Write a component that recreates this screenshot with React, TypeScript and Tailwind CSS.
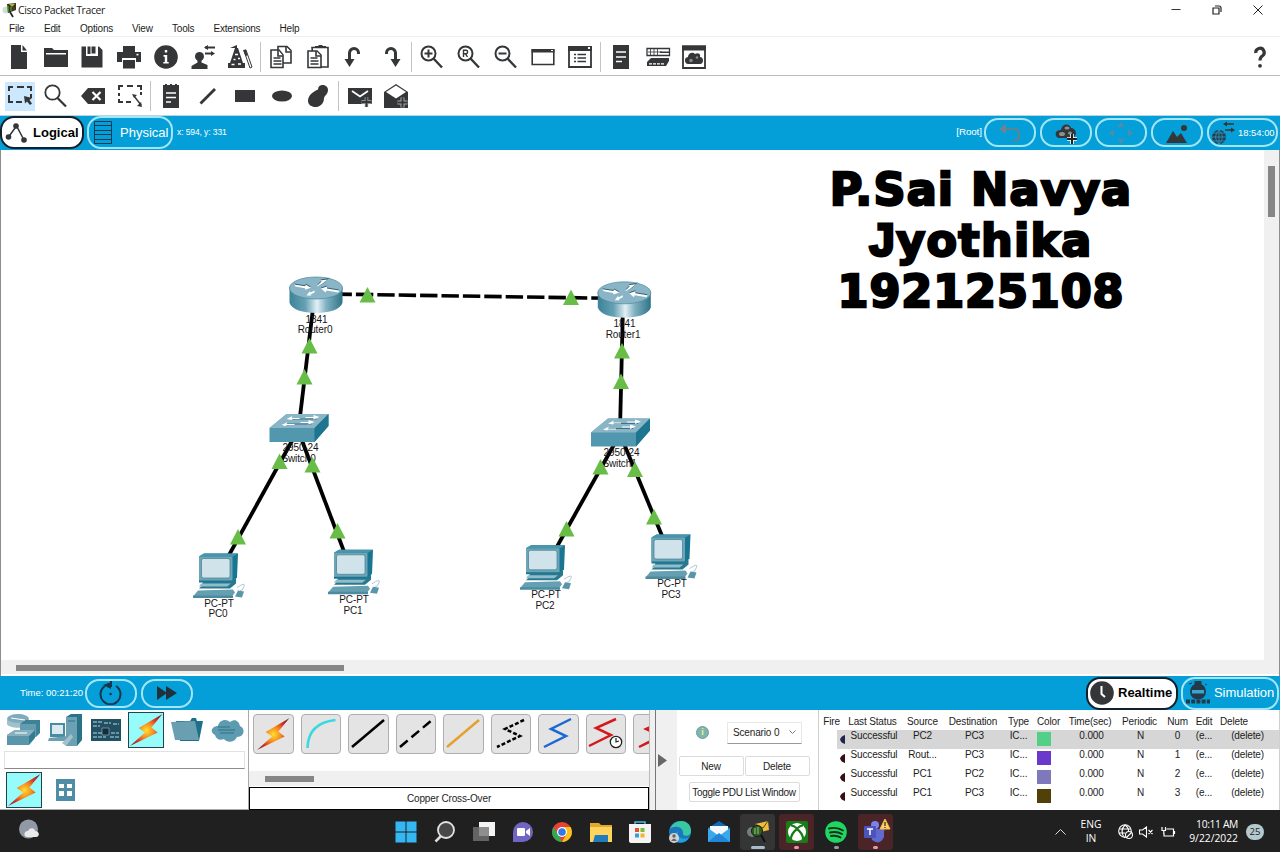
import React from "react";

type Kids = { children?: React.ReactNode };

const DARK = "#343638";

function Icon({ children, s = 24 }: Kids & { s?: number }) {
  return (
    <svg width={s} height={s} viewBox="0 0 24 24" fill={DARK} stroke="none" className="block shrink-0 overflow-visible">
      {children}
    </svg>
  );
}

function Sep() {
  return (
    <div className="flex w-[4.4px] justify-center">
      <div className="h-[30px] w-px bg-[#c4c4c4]" />
    </div>
  );
}

function Tool({ children, active }: Kids & { active?: boolean }) {
  return (
    <div className="flex w-[36.8px] items-center justify-center">
      <div className={active ? "flex h-[29px] w-[30px] items-center justify-center bg-[#cce8ff]" : "flex h-[29px] w-[30px] items-center justify-center"}>
        <Icon>{children}</Icon>
      </div>
    </div>
  );
}

function Lens({ children }: Kids) {
  return (
    <g>
      <circle cx="8.5" cy="8.5" r="7" fill="none" stroke={DARK} strokeWidth="2" />
      <path d="M13.5 13.5 22 22.5" stroke={DARK} strokeWidth="2.4" />
      {children}
    </g>
  );
}

function Toolbars() {
  return (
    <>
      <div className="flex h-[39px] items-center border-b-[1.5px] border-[#bdbdbd] pl-[0.4px] pt-[2px]">
        <Tool><path d="M4 0h10v7h6v17H4zM15.5 0 20 5.5h-4.5z" /></Tool>
        <Tool><path d="M0 3h8l2 2h14v3H0zM0 9.500h24V22H0zM0 3h2v8H0zM22 6h2v6h-2z" /></Tool>
        <Tool><path d="M1.500 1.500H6V11h12V1.500h1l3.500 3.500v17.500h-21zM11.500 1.500h4v7h-4zM7.500 1.500h3V9h-3z" /></Tool>
        <Tool><path d="M6 1h12v6H6zM0 7h24v10h-5v-4H5v4H0zM6 15h12v8.500H6z" /><rect x="19.500" y="8.800" width="2" height="1.600" fill="white" /></Tool>
        <Tool><circle cx="12" cy="12" r="11.800" /><path d="M10.800 5h2.400v2.600h-2.400zM9.500 10h3.700v7h1.500v1.600H9.300V17h1.500v-5.300H9.500z" fill="white" /></Tool>
        <Tool>
          <circle cx="8.500" cy="11.500" r="4.500" /><path d="M6.500 14h4v3.500l6 2.500v4H.500v-3l6-3.500z" />
          <path d="M14 2.500h10M14 8.500h8" stroke={DARK} strokeWidth="1.800" /><path d="m13 2.500 4-2.500v5zM24 8.500 20 6v5z" />
        </Tool>
        <Tool>
          <path d="m2 3 7-3v3h1l5 15h2v5H0v-5h2L7 3z" /><path d="M7 9.500h3M5.500 14.500h2M10 13.500h2M3.500 19.500h3M10 19h3" stroke="white" strokeWidth="1.600" /><path d="m16 6 2-1 6 17-2 1z" fill="white" stroke={DARK} strokeWidth="1" /><path d="m15 5 3-.500 1.500 6-2 .500z" />
        </Tool>
        <Sep />
        <Tool>
          <g fill="white" stroke={DARK} strokeWidth="1.600"><path d="M9 1.500h9l4 4V18H9z" /><path d="M17 2v5h5" /><path d="M2 5h8l4 5v12.500H2z" /><path d="M9 5v6h5M4.500 13h7M4.500 16h8M4.500 19h8" /></g>
        </Tool>
        <Tool>
          <g fill="white" stroke={DARK} strokeWidth="1.600"><path d="M6 2.500h16V22H8z" /><path d="M2 6h9l4 4v12.500H2z" /><path d="M10 6v5h5M4.500 13h7M4.500 16h8M4.500 19h8" /></g><path d="M9 3V1h3l1-1h3l1 1h3v2z" />
        </Tool>
        <Tool><path d="M7.500 15V8a4.500 4.500 0 0 1 9 0v1" fill="none" stroke={DARK} strokeWidth="3" /><path d="M2.500 14h10L7.500 22z" /></Tool>
        <Tool><path d="M16.500 15V8a4.500 4.500 0 0 0-9 0v1" fill="none" stroke={DARK} strokeWidth="3" /><path d="M11.500 14h10l-5 8z" /></Tool>
        <Sep />
        <Tool><Lens><path d="M8.500 4.500v8M4.500 8.500h8" stroke={DARK} strokeWidth="2" /></Lens></Tool>
        <Tool><Lens><path d="M6.500 12V5.300h2.400a1.700 1.700 0 0 1 0 3.500H6.800h1.700l2 3.200" fill="none" stroke={DARK} strokeWidth="1.400" /></Lens></Tool>
        <Tool><Lens><path d="M4.500 8.500h8" stroke={DARK} strokeWidth="2" /></Lens></Tool>
        <Tool><path d="M1.200 5h21.600v14.500H1.200z" fill="none" stroke={DARK} strokeWidth="1.600" /><path d="M.500 4h23v3.500H.500z" /><path d="M20 5h2v1h-2z" fill="white" /></Tool>
        <Tool>
          <path d="M1 2h22v20H1z" fill="none" stroke={DARK} strokeWidth="1.800" /><path d="M0 1h24v5H0z" />
          <path d="M6 9.500h2M6 13h2M6 16.500h2M9.500 9.500H18M9.500 13H18M9.500 16.500H18" stroke={DARK} strokeWidth="1.700" /><path d="M20 2h2v2h-2z" fill="white" />
        </Tool>
        <Sep />
        <Tool><path d="M4 0h16v24H4z" /><path d="M7 7h10M7 12h10M7 16.500h6" stroke="white" strokeWidth="1.700" /></Tool>
        <Tool>
          <path d="M1 3.500h22.500v7H1z" fill="none" stroke={DARK} strokeWidth="1.300" /><path d="M2 7h14M4.500 4v6M8 4v6M11.500 4v6" stroke={DARK} strokeWidth=".8" /><path d="M14 6.500h9v1.500h-9z" />
          <path d="M5 13h18v3l-3 5H1v-4z" /><path d="M3 18.800h15" stroke="white" strokeWidth="1.200" strokeDasharray="3 1" />
        </Tool>
        <Tool>
          <path d="M1 1.500h22v21.500H1z" fill="none" stroke={DARK} strokeWidth="1.800" /><path d="M0 .500h24v5H0z" />
          <path d="M7 19a3.500 3.500 0 0 1-1-7c0-4 5-5.500 7-3 3-2 6 0 5 3 4 0 4 7 0 7z" /><circle cx="9" cy="15.500" r="1.800" fill="#888" /><circle cx="15" cy="12.500" r="1.300" fill="#888" />
        </Tool>
        <div className="flex flex-1 justify-end pr-[8px]">
          <Icon><path d="M7.800 8a4.200 4.200 0 1 1 6.500 3c-1.600 1-2.300 2-2.300 4.500" fill="none" stroke={DARK} strokeWidth="3.200" /><circle cx="12" cy="20.800" r="1.900" /></Icon>
        </div>
      </div>
      <div className="flex h-[39.5px] items-center border-b border-[#b5d6e2] pl-[1.2px] pt-[1.500px]">
        <Tool active>
          <path d="M1 7V3h4M9 3h7M19 3h4v4M23 10v4M1 11v7h4M8 18h6" fill="none" stroke={DARK} strokeWidth="2" /><path d="m16 12 8 2-2.500 2 2.500 3.500-2 1.500-3-3.500-2 2z" />
        </Tool>
        <Tool><circle cx="8.500" cy="8.500" r="7.200" fill="none" stroke={DARK} strokeWidth="1.800" /><path d="m13.500 14 8.500 8.500" stroke={DARK} strokeWidth="2.300" /></Tool>
        <Tool><path d="m0 12 7-8h17v16H7z" /><path d="m11.500 8 8 8m0-8-8 8" stroke="white" strokeWidth="2.200" /></Tool>
        <Tool>
          <path d="M1 6V2h4M9 2h6M19 2h4v4M23 8v3M1 9v3M1 15v3h4M8 18h5" fill="none" stroke={DARK} strokeWidth="2" /><path d="m16 12 7 9" stroke={DARK} strokeWidth="1.400" /><path d="m14 10 5 1-3 3zM24 23l-5-1 4-4z" />
        </Tool>
        <Sep />
        <Tool><path d="M4 1h2V0h2v1h3V0h2v1h3V0h2v1h2v23H4z" /><path d="M7 9h10M7 13.500h10M7 18h5" stroke="white" strokeWidth="1.700" /></Tool>
        <Tool><path d="M4.500 19.500 19 5" stroke={DARK} strokeWidth="2.800" /></Tool>
        <Tool><path d="M2 6h20v12H2z" /></Tool>
        <Tool><ellipse cx="12" cy="12" rx="10" ry="5.500" /></Tool>
        <Tool><path d="M12 5.500C12-1 22 0 22 6c0 4-3 5-4 8 0 12-16 11-16 3 0-5 4-9 10-11.500z" /></Tool>
        <Sep />
        <Tool><path d="M0 4h24v16H0z" /><path d="m4 7 8 5.500L20 7" fill="none" stroke="white" strokeWidth="1.800" /><path d="M18.500 13v10M13.500 18h10" stroke="#aaa" strokeWidth="3.500" /><path d="M18.500 13v10M13.500 18h10" stroke={DARK} strokeWidth="2" /></Tool>
        <Tool><path d="M0 8 12 0l12 8v16H0z" /><path d="m2 8 10-6.500L22 8l-10 6.500z" fill="white" /><path d="M18.500 13.500v10M13.500 18.500h10" stroke="#aaa" strokeWidth="4" /><path d="M18.500 13.500v10M13.500 18.500h10" stroke={DARK} strokeWidth="2" /></Tool>
      </div>
    </>
  );
}

function Pill({ children, w }: Kids & { w: string }) {
  return <div className={"flex h-[29px] shrink-0 items-center justify-center rounded-[14px] border-2 border-[#a4e6f6] " + w}>{children}</div>;
}

function TopBlue() {
  return (
    <div className="flex h-[34.5px] items-center bg-[#049fd9] text-white">
      <div className="flex h-[33px] w-[84px] items-center rounded-[14px] border-2 border-[#13202a] bg-white pl-[3px] text-[13px] font-bold text-black">
        <svg width="24" height="24" viewBox="0 0 24 24" className="mr-[4px] shrink-0"><path d="m3.500 16 8-11 7.500 14" fill="none" stroke={DARK} strokeWidth="1.500" /><g fill={DARK}><circle cx="3.500" cy="16" r="2.800" /><circle cx="11" cy="5" r="2.800" /><circle cx="19" cy="19" r="2.800" /></g></svg>
        <span>Logical</span>
      </div>
      <div className="ml-[3px] flex h-[33px] w-[86px] items-center rounded-[14px] border-2 border-[#a4e6f6] pl-[5px] text-[13px]">
        <svg width="18" height="23" viewBox="0 0 18 23" className="mr-[8px] shrink-0"><path d="M.500 .500h17v22H.500zM.500 4.500h17M.500 9.500h17M.500 13.500h17M.500 18.500h17" fill="none" stroke="#0f3c52" strokeWidth="1" /></svg>
        <span>Physical</span>
      </div>
      <span className="ml-[4px] text-[8.500px] tracking-[-0.1px]">x: 594, y: 331</span>
      <div className="ml-auto flex items-center gap-[3.700px] pr-[2.200px]">
        <span className="-mr-[1.500px] text-[9.800px] tracking-[-0.1px]">[Root]</span>
        <Pill w="w-[52px]"><svg width="24" height="20" viewBox="0 0 24 20"><path d="M5 6h11q5 0 5 5v2q0 5-6 5" fill="none" stroke="#5f8295" strokeWidth="2.200" /><path d="m1 6 7-5v10z" fill="#6f8492" /></svg></Pill>
        <Pill w="w-[52px]"><svg width="24" height="24" viewBox="0 0 24 24"><path d="M5 17a4 4 0 0 1-2-7c2-1 2-1 4-1 1-7 9-7 10-2 5 0 7 7 2 10z" fill={DARK} /><g fill="#8a9196"><ellipse cx="8" cy="13" rx="3" ry="2" /><ellipse cx="13" cy="7" rx="2.500" ry="1.500" /><ellipse cx="16" cy="12" rx="2" ry="1.500" /></g><path d="M18 13v10M13 18h10" stroke="white" strokeWidth="3.600" /><path d="M18 13v10M13 18h10" stroke="#222" strokeWidth="2" /></svg></Pill>
        <Pill w="w-[52px]"><svg width="24" height="24" viewBox="0 0 24 24" fill="#4e8cab"><path d="m12 1 4 5H8zM12 23l4-5H8zM0 12l5-4v8zM24 12l-5-4v8z" /></svg></Pill>
        <Pill w="w-[52px]"><svg width="24" height="20" viewBox="0 0 24 20" fill={DARK}><path d="m1 20 7-12 4 6 4-4 6 10z" /><circle cx="19" cy="5" r="3" /></svg></Pill>
        <Pill w="w-[71px]">
          <svg width="26" height="26" viewBox="0 0 26 26" className="shrink-0"><circle cx="9" cy="17" r="7" fill="#1f3f50" /><path d="M2 17h14M9 10v14M3 13h12M3 21h12M9 10q-7 7 0 14M9 10q7 7 0 14" fill="none" stroke="#38a0cc" strokeWidth=".7" /><path d="M15 4h9M15 10h8" stroke={DARK} strokeWidth="1.600" /><path d="m13 4 4-2.500v5zM25 10l-4-2.500v5z" fill={DARK} /></svg>
          <span className="ml-[2px] text-[9.400px]">18:54:00</span>
        </Pill>
      </div>
    </div>
  );
}

function Router({ x, y }: { x: number; y: number }) {
  return (
    <g transform={`translate(${x} ${y})`}>
      <path d="M0 11v15c3 14 50 14 53 0V11z" fill="url(#cyl)" />
      <ellipse cx="26.500" cy="11.500" rx="26.500" ry="11" fill="#8ab5c6" stroke="#4d8a9f" strokeWidth=".7" />
      <g fill="#34606f" transform="translate(0 -1)"><path d="m4.500 8 11 1.800 1-1.500 5 3-6 2v-1.500L6 10zM49 16l-12-2-1 2-4.500-4 6-2v2l12 2zM28 9l4-4-1-1 6-1 3-1-5 5-5 3z" /></g>
      <g fill="white"><path d="m4.500 8 11 1.800 1-1.500 5 3-6 2v-1.500L6 10zM49 16l-12-2-1 2-4.500-4 6-2v2l12 2zM28 9l4-4-1-1 7-1-5 4-5 3zM25 14l-4 2-1-1-3 4h5l-1-1 4-2z" /></g>
    </g>
  );
}

function Switch({ x, y }: { x: number; y: number }) {
  return (
    <g transform={`translate(${x} ${y})`}>
      <path d="M0 14 17 0h42v12L45 28H0z" fill="#5197ae" />
      <path d="M0 14 17 0h42L45 14z" fill="#8ab5c6" />
      <path d="M45 14 59 0v12L45 28z" fill="#1d758f" />
      <g stroke="#3f7488" strokeWidth="1" fill="none"><path d="M21 5h26M15 10h27" /></g>
      <path d="m17 5 6-3-1 2h8v1h-7l-1 1zM50 3l-6 2.500v-1.500h-8v-1h8V1zM12 11l6-3-1 2h8v1h-8l-1 1zM45 8l-6 2.500V9h-8V8h8V6z" fill="white" />
    </g>
  );
}

function Pc({ x, y }: { x: number; y: number }) {
  return (
    <g transform={`translate(${x} ${y})`}>
      <path d="m6 3 5-3h34l-1 24-5 5H6z" fill="#197590" />
      <path d="m6 3 5-3h34l-5 3z" fill="#4995aa" />
      <path d="M6 3h33.500v24H6z" fill="#6ca5b8" />
      <rect x="8.500" y="5" width="28.500" height="19.500" rx="2" fill="#d0e2ea" stroke="#427f94" strokeWidth=".7" />
      <path d="M10 28h27l6-3v5l-6 5H6l3-3z" fill="#27798f" /><path d="M8 30h30l-4 3H6z" fill="#91bdcb" />
      <path d="m5 37 35-1 2 3-3 4H0z" fill="#659fb2" /><path d="M0 42h40v2.500H0z" fill="#4b8ba0" />
      <path d="M44 34q9-6 7-1t-4 4" fill="none" stroke="#9bbbc6" strokeWidth=".8" /><path d="m45 37 6 1-2 6-7-1z" fill="#5996aa" />
    </g>
  );
}

const cables: [number, number, number, number][] = [
  [314, 300, 299, 425], [298, 430, 218, 575], [298, 430, 351, 570],
  [623, 305, 620, 430], [620, 434, 545, 568], [620, 434, 672, 560],
];
const lights: [number, number][] = [
  [367.5, 295], [571, 297.5], [309.5, 346], [304.5, 377], [622, 351], [621, 381.5],
  [279.5, 461.5], [312.500, 465], [238, 537], [337.5, 531], [600.500, 467], [635, 469.500], [566.500, 529], [654, 517],
];
const labels: [number, number, string][] = [
  [316.500, 322.500, "1841"], [315, 333, "Router0"], [624.500, 327, "1841"], [623, 337.500, "Router1"],
  [300.500, 451, "2950-24"], [298.500, 461.800, "Switch0"], [621.500, 456, "2950-24"], [619.500, 466.500, "Switch1"],
  [219, 606.500, "PC-PT"], [218, 617, "PC0"], [354, 603, "PC-PT"], [353, 613.500, "PC1"],
  [546, 598, "PC-PT"], [545, 608.500, "PC2"], [672, 587, "PC-PT"], [671, 597.800, "PC3"],
];

function Canvas() {
  return (
    <div className="flex h-[526px] flex-col border-x border-[#8d8d8d] bg-[#f0f0f0]">
      <div className="flex h-[510px]">
        <div className="relative w-[1263px] shrink-0 bg-white">
          <svg width="1263" height="510" viewBox="1 150 1263 510" className="block">
            <defs><linearGradient id="cyl"><stop offset="0" stopColor="#3c8298" /><stop offset=".3" stopColor="#66a1b4" /><stop offset=".52" stopColor="#e2f0f5" /><stop offset=".7" stopColor="#7eb0c0" /><stop offset="1" stopColor="#2e7488" /></linearGradient></defs>
            <g stroke="black" strokeWidth="3.800"><path d="M316 293.800 624 298.500" strokeDasharray="17.400 4" strokeDashoffset="2.900" strokeWidth="3.600" />{cables.map((c, i) => <line key={i} x1={c[0]} y1={c[1]} x2={c[2]} y2={c[3]} />)}</g>
            <Router x={289.5} y={276.500} /><Router x={597.8} y={281.3} />
            <Switch x={269.5} y={414} /><Switch x={591} y={418.500} />
            <Pc x={193} y={553.5} /><Pc x={328} y={549.800} /><Pc x={520} y={545.300} /><Pc x={645.500} y={534.500} />
            {labels.map((l, i) => <text key={i} x={l[0]} y={l[1]} textAnchor="middle" fontSize="10" letterSpacing="-.12" fill="#151515">{l[2]}</text>)}
            {lights.map((p, i) => <path key={i} d={`M${p[0] - 8} ${p[1] + 7.5}h16L${p[0]} ${p[1] - 8}z`} fill="#67bd45" />)}
          </svg>
          <div className="absolute left-[780px] top-[14px] w-[400px] whitespace-nowrap text-center font-['DejaVu_Sans'] text-[44.500px] font-bold leading-[51px] text-black [-webkit-text-stroke:2.4px_black]">
            <div className="tracking-[1.2px]">P.Sai Navya</div>
            <div className="tracking-[1.3px]"><span className="font-['Liberation_Sans'] text-[46px] leading-none [-webkit-text-stroke:3px_black]">J</span>yothika</div>
            <div className="tracking-[0.9px]">192125108</div>
          </div>
        </div>
        <div className="flex flex-1 justify-center pt-[16px]"><div className="h-[51px] w-[7px] bg-[#868686]" /></div>
      </div>
      <div className="flex h-[14px] items-center pl-[15px] pt-[2px]"><div className="h-[6px] w-[328px] bg-[#868686]" /></div>
      <div className="h-[2px] bg-white" />
    </div>
  );
}

function MidBlue() {
  return (
    <div className="flex h-[34px] items-center bg-[#049fd9] text-white">
      <span className="ml-[20px] w-[65px] whitespace-nowrap text-[9.500px]">Time: 00:21:20</span>
      <Pill w="w-[52px]"><svg width="24" height="24" viewBox="0 0 24 24"><path d="M6 5a10 10 0 1 0 11 0" fill="none" stroke="#17364a" strokeWidth="2" /><path d="m4 4 8-3v7zM11 0h2v6h-2z" fill="#17364a" /><circle cx="11.500" cy="13" r="1.300" fill="#17364a" /></svg></Pill>
      <div className="w-[4px]" />
      <Pill w="w-[52px]"><svg width="20" height="14" viewBox="0 0 20 14" fill="#21313b"><path d="m0 0 10 7-10 7zM9 0l11 7-11 7z" /></svg></Pill>
      <div className="ml-auto flex h-[33px] w-[92px] items-center rounded-[14px] border-2 border-[#13202a] bg-white pl-[2px] text-[13px] font-bold text-black">
        <svg width="24" height="24" viewBox="0 0 24 24" className="mr-[4px] shrink-0"><circle cx="12" cy="12" r="11.800" fill={DARK} /><path d="M11.500 5v8l3.500 3" fill="none" stroke="white" strokeWidth="2" /></svg>
        <span>Realtime</span>
      </div>
      <div className="ml-[3px] mr-[1px] flex h-[33px] w-[98px] items-center rounded-[14px] border-2 border-[#a4e6f6] pl-[2px] text-[13px]">
        <svg width="25" height="24" viewBox="0 0 25 24" className="mr-[4px] shrink-0"><circle cx="13" cy="10.500" r="8" fill="#243a48" /><path d="M10 0h6v4h-6zM4 3l3-1M20 3l2 1" fill="#243a48" stroke="#243a48" /><rect x="7" y="9" width="12" height="3.500" fill="#3ba4cf" /><path d="M1 20.500h24" stroke="#243a48" strokeWidth="4" strokeDasharray="4 1.200" /></svg>
        <span className="tracking-[-0.05px]">Simulation</span>
      </div>
    </div>
  );
}

function Bolt({ s = 34 }: { s?: number }) {
  return (
    <svg width={s} height={s} viewBox="2 2 35 35" className="block">
      <defs><radialGradient id="bolt" gradientUnits="userSpaceOnUse" cx="20" cy="20" r="19"><stop offset="0" stopColor="#ffe02e" /><stop offset=".4" stopColor="#f68a1f" /><stop offset=".75" stopColor="#d62f22" /><stop offset="1" stopColor="#93232f" /></radialGradient></defs>
      <path d="M36.500 3 12 17.500l6.500 4.500L3 36l28.500-14L25 17z" fill="url(#bolt)" />
    </svg>
  );
}

function LeftPalette() {
  return (
    <div className="flex h-full w-[249px] flex-col border-b border-r border-[#a9a9a9] bg-white">
      <div className="flex h-[40px] items-center pl-[3px]">
        <div className="flex w-[41px] justify-center"><svg width="34" height="32" viewBox="0 0 34 32"><ellipse cx="11" cy="5" rx="11" ry="5" fill="#7eabbc" /><path d="M0 5v5c2 5 20 5 22 0V5c-2 5-20 5-22 0z" fill="#9fc1cd" /><path d="m13 10 5-4h15v13l-4 4H13z" fill="#3e8298" /><path d="M13 10h16v13H13z" fill="#649cb0" /><path d="m0 21 8-5h20v8l-6 7H0z" fill="#347a91" /><path d="m0 21 8-5h20l-6 6H0z" fill="#86b0c0" /><path d="M0 22h22v9H0z" fill="#5996ab" /><path d="m4 4 14 2M8 19h12" stroke="white" /></svg></div>
        <div className="flex w-[41px] justify-center"><svg width="34" height="32" viewBox="0 0 34 32"><path d="M18 3 23 0h11v26l-5 6H18z" fill="#2b7289" /><path d="M18 3h11v29H18z" fill="#6ba1b3" /><path d="M2 9h15v14H2z" fill="#488ca3" /><path d="M4 11h11v9H4z" fill="#dce9ee" /><path d="m1 24 19-2 1 3-3 2H0z" fill="#6ca0b1" /><path d="m14 29 9-9 2 3-7 9z" fill="#a4c1cb" /><path d="M20 7h7" stroke="#2b7289" /></svg></div>
        <div className="flex w-[41px] justify-center"><svg width="30" height="23" viewBox="0 0 30 23"><path d="M0 0h30v22H0z" fill="#234f61" /><path d="M2 3h9M2 7h7M13 4h7M22 5h6M2 14h9M2 18h13M20 14h8M19 18h9" stroke="#6398ac" strokeWidth="2" strokeDasharray="4 1" /><path d="M11 9h7v7h-7z" fill="#152d38" stroke="#8baebc" strokeWidth=".7" /></svg></div>
        <div className="ml-[2px] flex h-[36px] w-[36px] items-center justify-center border border-[#20434c] bg-[#96fbfb]"><Bolt /></div>
        <div className="ml-[2px] flex w-[41px] justify-center"><svg width="32" height="24" viewBox="0 0 32 24"><path d="M5 3h14l2-3h4l1 3h6l-4 20H9z" fill="#1e7088" /><path d="m0 4 24-1 4 19H4z" fill="#6a9fb2" /></svg></div>
        <div className="flex w-[40px] justify-center"><svg width="33" height="23" viewBox="0 0 33 23"><path d="M4 16c-6-3-3-9 3-9 1-6 8-8 12-4 5-4 9-1 10 4 6 3 4 11-3 11-3 6-10 6-13 2-4 2-8 0-9-4z" fill="#5d9bb0" /><path d="M7 8h12M7 11h17M9 14h14" stroke="#2f7289" strokeWidth="1.200" /></svg></div>
      </div>
      <div className="ml-[4px] mt-px h-[18px] w-[241px] border border-[#e2e2e2] border-b-[#8b8b8b]" />
      <div className="flex flex-1 items-center gap-[14px] pl-[6px] pt-px">
        <div className="flex h-[36px] w-[36px] items-center justify-center border border-[#20434c] bg-[#96fbfb]"><Bolt /></div>
        <div className="grid h-[22px] w-[19px] grid-cols-2 place-content-center place-items-center gap-[3px] bg-[#4e8da5] p-[3px]">
          {[0, 1, 2, 3].map((i) => <div key={i} className="h-[4.500px] w-[4.500px] bg-white" />)}
        </div>
      </div>
    </div>
  );
}

function Tile({ children }: Kids) {
  return <div className="flex h-[40px] w-[40.500px] shrink-0 items-center justify-center rounded-[4px] border border-[#aeaeae] bg-[#e4e4e4]"><svg width="40" height="40" viewBox="0 0 40 40" fill="none" strokeWidth="2.500" className="shrink-0">{children}</svg></div>;
}

function Cables() {
  return (
    <div className="flex h-full w-[400px] flex-col">
      <div className="flex h-[61px] gap-[7px] overflow-hidden pl-[4px] pt-[4px]">
        <div className="flex h-[40px] w-[40.500px] shrink-0 items-center justify-center rounded-[4px] border border-[#aeaeae] bg-[#e4e4e4]"><Bolt /></div>
        <Tile><path d="M6.500 34Q7 9 34.500 6" stroke="#38d9df" /></Tile>
        <Tile><path d="M4 33 36 6" stroke="black" /></Tile>
        <Tile><path d="M4 33 36 6" stroke="black" strokeDasharray="10 5" /></Tile>
        <Tile><path d="M4 33 36 6" stroke="#e6a02e" /></Tile>
        <Tile><path d="M33 6 14 15l15 7L6 33" stroke="black" strokeDasharray="4 2" /></Tile>
        <Tile><path d="M33 5 13 15l15 7L6 33" stroke="#1c68d4" /></Tile>
        <Tile><path d="M30 5 10 14l15 7L3 32" stroke="#d3191d" /><circle cx="30" cy="28" r="5.700" fill="white" stroke="#222" strokeWidth="1.300" /><path d="M30 24v4l3-1" stroke="#222" strokeWidth="1.200" /></Tile>
        <Tile><path d="M34 5 13 15l15 7L6 33" stroke="#d3191d" /></Tile>
      </div>
      <div className="flex h-[15px] items-center bg-[#f0f0f0] pl-[16px]"><div className="h-[6px] w-[49px] bg-[#868686]" /></div>
      <div className="mt-px flex flex-1 items-center justify-center border-[1.500px] border-black bg-white text-[10px] tracking-[-0.15px]">Copper Cross-Over</div>
    </div>
  );
}

const rows: [string, string, string, string][] = [
  ["PC2", "PC3", "bg-[#53d087]", "#20254a"], ["Rout...", "PC3", "bg-[#6939cd]", "#3a0c13"],
  ["PC1", "PC2", "bg-[#7d79ba]", "#3a0c13"], ["PC1", "PC3", "bg-[#524009]", "#3a0c13"],
];
const grid = "grid grid-cols-[25px_57px_43px_58px_33px_27px_56px_43px_33px_20px_1fr] text-center whitespace-nowrap";

function Simulations() {
  return (
    <div className="flex h-full flex-1 bg-white text-[10px] tracking-[-0.15px]">
      <div className="flex w-[141px] flex-col items-center pt-[11px]">
        <div className="flex h-[23px] w-full items-center pl-[19px]">
          <div className="flex h-[13px] w-[13px] items-center justify-center rounded-full border border-[#6b9ea0] bg-[#81b5aa] text-[9px] font-bold text-[#e8f2a6]">i</div>
          <div className="ml-[18px] flex h-[22px] w-[75px] items-center justify-between border border-[#e8e8e8] border-b-[#999] pl-[5px] pr-[5px]">Scenario 0<svg width="7" height="5" viewBox="0 0 7 5" fill="none" stroke="#777"><path d="m.500 .500 3 3 3-3" /></svg></div>
        </div>
        <div className="-ml-[7px] mt-[12px] flex gap-[1px]">
          <div className="flex h-[20px] w-[65px] items-center justify-center rounded-[2px] border border-[#dcdcdc]">New</div>
          <div className="flex h-[20px] w-[65px] items-center justify-center rounded-[2px] border border-[#dcdcdc]">Delete</div>
        </div>
        <div className="ml-[-7px] mt-[6px] flex h-[20px] w-[111px] items-center justify-center overflow-hidden whitespace-nowrap rounded-[2px] border border-[#dcdcdc] tracking-[-0.3px]">Toggle PDU List Window</div>
      </div>
      <div className="flex flex-1 flex-col border-l border-r border-[#cfcfcf] pt-[2px]">
        <div className={grid + " h-[18px] items-center"}>
          <span>Fire</span><span>Last Status</span><span>Source</span><span>Destination</span><span>Type</span><span>Color</span><span>Time(sec)</span><span>Periodic</span><span>Num</span><span>Edit</span><span className="pl-[6px] text-left">Delete</span>
        </div>
        {rows.map((r, i) => (
          <div key={i} className={(i === 0 ? "bg-[linear-gradient(90deg,white_18px,#d6d6d6_18px)] " : "") + grid + " h-[19px] leading-[11px]"}>
            <svg width="5" height="9" viewBox="0 0 5 9" className="ml-[21px] mt-[5px]"><path d="M5 0v9Q1 8 0 4.500 1 1 5 0z" fill={r[3]} /></svg>
            <span className="pl-[3px]">Successful</span><span>{r[0]}</span><span className="pl-[3px]">{r[1]}</span><span>IC...</span>
            <div className={"ml-[2px] mt-[2px] h-[14px] w-[14px] " + r[2]} />
            <span className="pl-[3px]">0.000</span><span className="pl-[2px]">N</span><span>{i}</span><span>(e...</span><span className="pl-[2px]">(delete)</span>
          </div>
        ))}
      </div>
    </div>
  );
}

function Task({ children, tone = "", mark = "" }: Kids & { tone?: string; mark?: string }) {
  return (
    <div className="flex w-[39.150px] justify-center">
      <div className={"flex h-[36px] w-[35px] flex-col items-center rounded-[3px] pt-[6px] " + tone}>
        <svg width="24" height="24" viewBox="0 0 24 24" className="overflow-visible">{children}</svg>
        <div className={"mt-[2.500px] h-[2.500px] rounded-full " + mark} />
      </div>
    </div>
  );
}

function Taskbar() {
  return (
    <div className="flex h-[42px] items-center bg-[#202020] pt-px text-white">
      <svg width="22" height="22" viewBox="0 0 22 22" className="-mt-[4px] ml-[18px]"><circle cx="10.500" cy="10" r="9.500" fill="#9199a4" /><path d="M9 18a3 3 0 0 1 1-6c2-4 7-3 7 0 5 0 5 6 1 6z" fill="#e9e9e9" /></svg>
      <div className="ml-[346px] flex h-[36px]">
        <Task><path d="M1.500 1.500h10v10h-10zM12.500 1.500h10v10h-10zM1.500 12.500h10v10h-10zM12.500 12.500h10v10h-10z" fill="#34b8f4" /></Task>
        <Task><path d="m8 16-5.500 5.500" stroke="#ddd" strokeWidth="2.500" /><circle cx="13" cy="10" r="8" fill="#484848" stroke="#e3e3e3" strokeWidth="1.800" /></Task>
        <Task><path d="M7 2h16v14H7z" fill="#f3f3f3" /><path d="M1 7h16v14H1z" fill="#747474" opacity=".8" /></Task>
        <Task><path d="M2 22V12A10 10 0 1 1 12 22z" fill="#7065c0" /><rect x="6" y="8" width="8" height="8" rx="1" fill="white" /><path d="m15 11 4-3v8l-4-3z" fill="white" /></Task>
        <Task><circle cx="12" cy="12" r="10" fill="#e74335" /><path d="M3.400 7 8.500 15 12 22A10 10 0 0 1 3.400 7z" fill="#31a853" /><path d="M12 7h8.600A10 10 0 0 1 12 22l4.500-8z" fill="#fac21b" /><circle cx="12" cy="12" r="5" fill="white" /><circle cx="12" cy="12" r="3.800" fill="#3478e8" /></Task>
        <Task><path d="M1 3h9l2 2h11v17H1z" fill="#e3a92d" /><path d="M1 7h22v15H1z" fill="#ffd45c" /><path d="M6 15h13v7H4z" fill="#207cbd" /></Task>
        <Task><path d="M7 6V2h10v4" fill="none" stroke="#47bce5" strokeWidth="1.500" /><path d="M1 4h22v17q0 2-3 2H4q-3 0-3-2z" fill="#f4f4f4" /><path d="M7 8h4v4H7z" fill="#e4552d" /><path d="M12.500 8h4v4h-4z" fill="#7fb93e" /><path d="M7 13.500h4v4H7z" fill="#35a0da" /><path d="M12.500 13.500h4v4h-4z" fill="#f6b724" /></Task>
        <Task><circle cx="12" cy="12" r="11" fill="#1b78be" /><path d="M2 9C6-2 23-2 23 11c0 6-9 6-8 2 0-7-9-8-13-4z" fill="#38c8a4" /><path d="M10 11c-2 7 5 9 11 7-6 8-16 4-14-4z" fill="#1fa3dd" /><circle cx="6" cy="18" r="5" fill="#d2d2d2" /><circle cx="6" cy="16" r="1.700" fill="#666" /><path d="M3 21q3-5 6 0z" fill="#666" /></Task>
        <Task><path d="m1 8 11-7 11 7v14H1z" fill="#1068bb" /><path d="M3 6h18v9H3z" fill="#f3f9ff" /><path d="m1 8 11 8 11-8v14H1z" fill="#3ba8eb" /><path d="m1 22 11-9 11 9z" fill="#2186d8" /></Task>
        <Task tone="bg-[#353535]" mark="w-[14px] bg-[#a7bec8]"><circle cx="6" cy="12" r="5" fill="#747f7a" /><path d="m9 4 13-3 1 9-12 3z" fill="#efbc3c" /><path d="m9 4 8 4 5-7" fill="none" stroke="#594418" /><circle cx="11" cy="11" r="5.500" fill="#2f5e2c" stroke="#161a16" /><path d="m15 15 4 7" stroke="#111" strokeWidth="2" /><path d="M9 8v6M12 7v7" stroke="#94ce5a" /></Task>
        <Task tone="bg-[#4a2426]" mark="w-[5px] bg-[#f0969f]"><rect x="1" y="1" width="22" height="22" rx="2" fill="#187c18" /><circle cx="12" cy="12" r="9" fill="white" /><path d="M6 5.500q3 0 6 3 3-3 6-3M12 9c-4 3-6 6-6 10M12 9c4 3 6 6 6 10" fill="none" stroke="#187c18" strokeWidth="2.200" /></Task>
        <Task mark="w-[5px] bg-[#9a9a9a]"><circle cx="12" cy="12" r="10.800" fill="#1ed760" /><path d="M5 8.500q8-2 14 2M6 12.500q7-1.500 12 1.500M7 16q6-1 9.500 1.500" fill="none" stroke="#172d1d" strokeWidth="1.900" strokeLinecap="round" /></Task>
        <Task tone="bg-[#4a2426]" mark="w-[5px] bg-[#f0969f]"><circle cx="12" cy="5" r="4" fill="#7b83eb" /><circle cx="19" cy="10" r="2.500" fill="#5059c9" /><path d="M7 9h14v8q-4 9-12 3z" fill="#6169cf" /><rect x="1" y="6" width="12" height="12" rx="1" fill="#4b53bc" /><path d="M4 9h6M7 9v6" stroke="white" strokeWidth="1.500" /><path d="m22-1 5 10H17z" fill="#ffd466" stroke="#f3bb48" strokeLinejoin="round" /><path d="M22 2v4M22 7v1" stroke="#222" strokeWidth="1.200" /></Task>
      </div>
      <div className="ml-auto flex items-center pr-[16px] font-['Open_Sans'] text-[10.300px] leading-[13.500px]">
        <svg width="11" height="6" viewBox="0 0 11 6" fill="none" stroke="#ddd"><path d="m.500 5.500 5-5 5 5" /></svg>
        <div className="ml-[14px] w-[22px] whitespace-nowrap text-center">ENG<br />IN</div>
        <svg width="15" height="15" viewBox="0 0 15 15" fill="none" stroke="white" strokeWidth="1.100" className="ml-[16px]"><circle cx="7" cy="7" r="6.300" /><path d="M1 5h12M1 9h6M7 1q-6 6 0 13M7 1q4 3 3.500 6" /><circle cx="11" cy="11" r="3.500" fill="#202020" /><path d="m8.500 13.500 5-5" /></svg>
        <svg width="14" height="12" viewBox="0 0 14 12" fill="none" stroke="white" strokeWidth="1.100" className="ml-[6px]"><path d="M.500 4h3l4-3v10l-4-3h-3zM9.500 4l4 4m0-4-4 4" /></svg>
        <svg width="15" height="12" viewBox="0 0 15 12" fill="none" stroke="white" strokeWidth="1.200" className="ml-[8px]"><path d="M5.500 3h7v7H3V7M13.500 5v3M1 1v3.500h3.500V1M2.800 4v4" /></svg>
        <div className="ml-[7px] w-[55px] whitespace-nowrap text-right"><span className="tracking-[-0.35px]">10:11 AM</span><br />9/22/2022</div>
        <div className="ml-[8px] flex h-[16px] w-[18px] items-center justify-center rounded-full bg-[#b4c8cf] text-[9.500px] text-[#202020]">25</div>
      </div>
    </div>
  );
}

export default function App() {
  return (
    <div className="flex h-[852px] w-[1280px] flex-col overflow-hidden bg-white font-['Liberation_Sans',Arial,sans-serif] text-[#1c1c1c]">
      <div className="flex h-[20px] items-center pl-[2px] pr-[17px]">
        <svg width="14" height="15" viewBox="0 0 14 15"><circle cx="4" cy="7" r="3.500" fill="#d1ddd1" /><path d="m5 1 9-1v7l-8 3z" fill="#263b1c" /><path d="m7 1 6 0-3 3z" fill="#c8a432" /><path d="m11 4 2 1-1 2z" fill="#b02b25" /><path d="m8 9 3 5" stroke="#222" strokeWidth="1.700" /><path d="M6 3v6M9 4v4" stroke="#65b64e" /></svg>
        <span className="ml-[2px] pt-px font-['Open_Sans'] text-[10.500px] tracking-[-0.4px]">Cisco Packet Tracer</span>
        <div className="ml-auto flex items-center gap-[31px]">
          <svg width="10" height="10" viewBox="0 0 10 10" stroke="#333"><path d="M.500 4.500h9" /></svg>
          <svg width="10" height="10" viewBox="0 0 10 10" fill="none" stroke="#222" strokeWidth="1.200"><path d="M1 3h6v6H1zM3 1h4q2 0 2 2v4" /></svg>
          <svg width="10" height="10" viewBox="0 0 10 10" stroke="#222"><path d="m.500.500 9 9m0-9-9 9" /></svg>
        </div>
      </div>
      <div className="flex h-[17px] items-center border-b border-[#eee] pl-[9px] pt-[1.500px] text-[10px] tracking-[-0.2px]">
        <span className="w-[35px]">File</span><span className="w-[36px]">Edit</span><span className="w-[52px]">Options</span><span className="w-[40px]">View</span><span className="w-[41.500px]">Tools</span><span className="w-[66px]">Extensions</span><span>Help</span>
      </div>
      <Toolbars />
      <TopBlue />
      <Canvas />
      <MidBlue />
      <div className="flex h-[100px]">
        <LeftPalette />
        <Cables />
        <div className="flex w-[28px] border-l border-[#bbb] bg-[#f0f0f0]">
          <div className="w-[6px] border-r border-[#777]" />
          <div className="flex w-[16px] items-center"><svg width="11" height="13" viewBox="0 0 11 13" className="ml-[1px]"><path d="m1 0 9 6.500L1 13z" fill="#68686a" /></svg></div>
        </div>
        <Simulations />
      </div>
      <Taskbar />
    </div>
  );
}
